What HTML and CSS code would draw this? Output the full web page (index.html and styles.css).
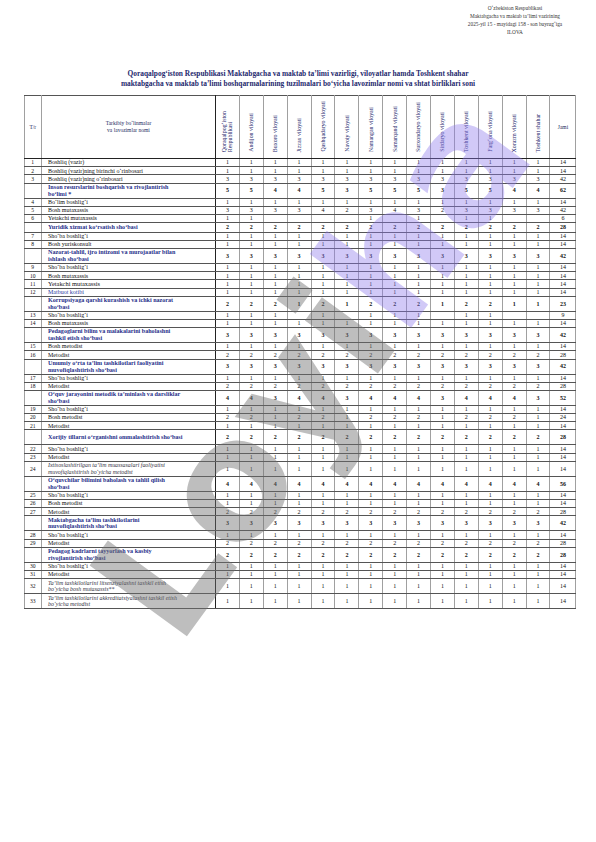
FILE: index.html
```html
<!DOCTYPE html>
<html lang="uz">
<head>
<meta charset="utf-8">
<title>Shtat birliklari</title>
<link rel="stylesheet" href="styles.css">
</head>
<body>
<div class="page">
  <div class="approval">
    <div>O‘zbekiston Respublikasi</div>
    <div>Maktabgacha va maktab ta’limi vazirining</div>
    <div>2025-yil 15 - mayidagi 158 - son buyrug‘iga</div>
    <div>ILOVA</div>
  </div>
  <h1 class="title">Qoraqalpog‘iston Respublikasi Maktabgacha va maktab ta’limi vazirligi, viloyatlar hamda Toshkent shahar<br>maktabgacha va maktab ta’limi boshqarmalarining tuzilmalari bo‘yicha lavozimlar nomi va shtat birliklari soni</h1>
  <table class="staff">
    <colgroup>
      <col class="c-n"><col class="c-l">
      <col class="c-r"><col class="c-r"><col class="c-r"><col class="c-r"><col class="c-r"><col class="c-r"><col class="c-r">
      <col class="c-r"><col class="c-r"><col class="c-r"><col class="c-r"><col class="c-r"><col class="c-r"><col class="c-r">
      <col class="c-j">
    </colgroup>
    <thead>
      <tr>
        <th class="h-n">T/r</th>
        <th class="h-l">Tarkibiy bo‘linmalar<br>va lavozimlar nomi</th>
        <th class="h-r"><span class="vt">Qoraqalpog‘iston<br>Respublikasi</span></th>
        <th class="h-r"><span class="vt">Andijon viloyati</span></th>
        <th class="h-r"><span class="vt">Buxoro viloyati</span></th>
        <th class="h-r"><span class="vt">Jizzax viloyati</span></th>
        <th class="h-r"><span class="vt">Qashqadaryo viloyati</span></th>
        <th class="h-r"><span class="vt">Navoiy viloyati</span></th>
        <th class="h-r"><span class="vt">Namangan viloyati</span></th>
        <th class="h-r"><span class="vt">Samarqand viloyati</span></th>
        <th class="h-r"><span class="vt">Surxondaryo viloyati</span></th>
        <th class="h-r"><span class="vt">Sirdaryo viloyati</span></th>
        <th class="h-r"><span class="vt">Toshkent viloyati</span></th>
        <th class="h-r"><span class="vt">Farg‘ona viloyati</span></th>
        <th class="h-r"><span class="vt">Xorazm viloyati</span></th>
        <th class="h-r"><span class="vt">Toshkent shahar</span></th>
        <th class="h-j">Jami</th>
      </tr>
    </thead>
    <tbody>
      <tr class="s"><td class="n">1</td><td class="l">Boshliq (vazir)</td><td>1</td><td>1</td><td>1</td><td>1</td><td>1</td><td>1</td><td>1</td><td>1</td><td>1</td><td>1</td><td>1</td><td>1</td><td>1</td><td>1</td><td class="j">14</td></tr>
      <tr class="s"><td class="n">2</td><td class="l">Boshliq (vazir)ning birinchi o‘rinbosari</td><td>1</td><td>1</td><td>1</td><td>1</td><td>1</td><td>1</td><td>1</td><td>1</td><td>1</td><td>1</td><td>1</td><td>1</td><td>1</td><td>1</td><td class="j">14</td></tr>
      <tr class="s"><td class="n">3</td><td class="l">Boshliq (vazir)ning o‘rinbosari</td><td>3</td><td>3</td><td>3</td><td>3</td><td>3</td><td>3</td><td>3</td><td>3</td><td>3</td><td>3</td><td>3</td><td>3</td><td>3</td><td>3</td><td class="j">42</td></tr>
      <tr class="d sec"><td class="n"></td><td class="l">Inson resurslarini boshqarish va rivojlantirish<br>bo‘limi *</td><td>5</td><td>5</td><td>4</td><td>4</td><td>5</td><td>3</td><td>5</td><td>5</td><td>5</td><td>3</td><td>5</td><td>5</td><td>4</td><td>4</td><td class="j">62</td></tr>
      <tr class="s"><td class="n">4</td><td class="l">Bo‘lim boshlig‘i</td><td>1</td><td>1</td><td>1</td><td>1</td><td>1</td><td>1</td><td>1</td><td>1</td><td>1</td><td>1</td><td>1</td><td>1</td><td>1</td><td>1</td><td class="j">14</td></tr>
      <tr class="s"><td class="n">5</td><td class="l">Bosh mutaxassis</td><td>3</td><td>3</td><td>3</td><td>3</td><td>4</td><td>2</td><td>3</td><td>4</td><td>3</td><td>2</td><td>3</td><td>3</td><td>3</td><td>3</td><td class="j">42</td></tr>
      <tr class="s"><td class="n">6</td><td class="l">Yetakchi mutaxassis</td><td>1</td><td>1</td><td></td><td></td><td></td><td></td><td>1</td><td></td><td>1</td><td></td><td>1</td><td>1</td><td></td><td></td><td class="j">6</td></tr>
      <tr class="s1 sec"><td class="n"></td><td class="l">Yuridik xizmat ko‘rsatish sho‘basi</td><td>2</td><td>2</td><td>2</td><td>2</td><td>2</td><td>2</td><td>2</td><td>2</td><td>2</td><td>2</td><td>2</td><td>2</td><td>2</td><td>2</td><td class="j">28</td></tr>
      <tr class="s"><td class="n">7</td><td class="l">Sho‘ba boshlig‘i</td><td>1</td><td>1</td><td>1</td><td>1</td><td>1</td><td>1</td><td>1</td><td>1</td><td>1</td><td>1</td><td>1</td><td>1</td><td>1</td><td>1</td><td class="j">14</td></tr>
      <tr class="s"><td class="n">8</td><td class="l">Bosh yuriskonsult</td><td>1</td><td>1</td><td>1</td><td>1</td><td>1</td><td>1</td><td>1</td><td>1</td><td>1</td><td>1</td><td>1</td><td>1</td><td>1</td><td>1</td><td class="j">14</td></tr>
      <tr class="d sec"><td class="n"></td><td class="l">Nazorat-tahlil, ijro intizomi va murojaatlar bilan<br>ishlash sho‘basi</td><td>3</td><td>3</td><td>3</td><td>3</td><td>3</td><td>3</td><td>3</td><td>3</td><td>3</td><td>3</td><td>3</td><td>3</td><td>3</td><td>3</td><td class="j">42</td></tr>
      <tr class="s"><td class="n">9</td><td class="l">Sho‘ba boshlig‘i</td><td>1</td><td>1</td><td>1</td><td>1</td><td>1</td><td>1</td><td>1</td><td>1</td><td>1</td><td>1</td><td>1</td><td>1</td><td>1</td><td>1</td><td class="j">14</td></tr>
      <tr class="s"><td class="n">10</td><td class="l">Bosh mutaxassis</td><td>1</td><td>1</td><td>1</td><td>1</td><td>1</td><td>1</td><td>1</td><td>1</td><td>1</td><td>1</td><td>1</td><td>1</td><td>1</td><td>1</td><td class="j">14</td></tr>
      <tr class="s"><td class="n">11</td><td class="l big">Yetakchi mutaxassis</td><td>1</td><td>1</td><td>1</td><td>1</td><td>1</td><td>1</td><td>1</td><td>1</td><td>1</td><td>1</td><td>1</td><td>1</td><td>1</td><td>1</td><td class="j">14</td></tr>
      <tr class="s"><td class="n">12</td><td class="l blue">Matbuot kotibi</td><td>1</td><td>1</td><td>1</td><td>1</td><td>1</td><td>1</td><td>1</td><td>1</td><td>1</td><td>1</td><td>1</td><td>1</td><td>1</td><td>1</td><td class="j">14</td></tr>
      <tr class="d sec"><td class="n"></td><td class="l">Korrupsiyaga qarshi kurashish va ichki nazorat<br>sho‘basi</td><td>2</td><td>2</td><td>2</td><td>1</td><td>2</td><td>1</td><td>2</td><td>2</td><td>2</td><td>1</td><td>2</td><td>2</td><td>1</td><td>1</td><td class="j">23</td></tr>
      <tr class="s"><td class="n">13</td><td class="l">Sho‘ba boshlig‘i</td><td>1</td><td>1</td><td>1</td><td></td><td>1</td><td></td><td>1</td><td>1</td><td>1</td><td></td><td>1</td><td>1</td><td></td><td></td><td class="j">9</td></tr>
      <tr class="s"><td class="n">14</td><td class="l">Bosh mutaxassis</td><td>1</td><td>1</td><td>1</td><td>1</td><td>1</td><td>1</td><td>1</td><td>1</td><td>1</td><td>1</td><td>1</td><td>1</td><td>1</td><td>1</td><td class="j">14</td></tr>
      <tr class="d sec"><td class="n"></td><td class="l">Pedagoglarni bilim va malakalarini baholashni<br>tashkil etish sho‘basi</td><td>3</td><td>3</td><td>3</td><td>3</td><td>3</td><td>3</td><td>3</td><td>3</td><td>3</td><td>3</td><td>3</td><td>3</td><td>3</td><td>3</td><td class="j">42</td></tr>
      <tr class="s"><td class="n">15</td><td class="l">Bosh metodist</td><td>1</td><td>1</td><td>1</td><td>1</td><td>1</td><td>1</td><td>1</td><td>1</td><td>1</td><td>1</td><td>1</td><td>1</td><td>1</td><td>1</td><td class="j">14</td></tr>
      <tr class="s"><td class="n">16</td><td class="l">Metodist</td><td>2</td><td>2</td><td>2</td><td>2</td><td>2</td><td>2</td><td>2</td><td>2</td><td>2</td><td>2</td><td>2</td><td>2</td><td>2</td><td>2</td><td class="j">28</td></tr>
      <tr class="d sec"><td class="n"></td><td class="l">Umumiy o‘rta ta’lim tashkilotlari faoliyatini<br>muvofiqlashtirish sho‘basi</td><td>3</td><td>3</td><td>3</td><td>3</td><td>3</td><td>3</td><td>3</td><td>3</td><td>3</td><td>3</td><td>3</td><td>3</td><td>3</td><td>3</td><td class="j">42</td></tr>
      <tr class="s"><td class="n">17</td><td class="l">Sho‘ba boshlig‘i</td><td>1</td><td>1</td><td>1</td><td>1</td><td>1</td><td>1</td><td>1</td><td>1</td><td>1</td><td>1</td><td>1</td><td>1</td><td>1</td><td>1</td><td class="j">14</td></tr>
      <tr class="s"><td class="n">18</td><td class="l">Metodist</td><td>2</td><td>2</td><td>2</td><td>2</td><td>2</td><td>2</td><td>2</td><td>2</td><td>2</td><td>2</td><td>2</td><td>2</td><td>2</td><td>2</td><td class="j">28</td></tr>
      <tr class="d sec"><td class="n"></td><td class="l">O‘quv jarayonini metodik ta’minlash va darsliklar<br>sho‘basi</td><td>4</td><td>4</td><td>3</td><td>4</td><td>4</td><td>3</td><td>4</td><td>4</td><td>4</td><td>3</td><td>4</td><td>4</td><td>4</td><td>3</td><td class="j">52</td></tr>
      <tr class="s"><td class="n">19</td><td class="l">Sho‘ba boshlig‘i</td><td>1</td><td>1</td><td>1</td><td>1</td><td>1</td><td>1</td><td>1</td><td>1</td><td>1</td><td>1</td><td>1</td><td>1</td><td>1</td><td>1</td><td class="j">14</td></tr>
      <tr class="s"><td class="n">20</td><td class="l">Bosh metodist</td><td>2</td><td>2</td><td>1</td><td>2</td><td>2</td><td>1</td><td>2</td><td>2</td><td>2</td><td>1</td><td>2</td><td>2</td><td>2</td><td>1</td><td class="j">24</td></tr>
      <tr class="s"><td class="n">21</td><td class="l">Metodist</td><td>1</td><td>1</td><td>1</td><td>1</td><td>1</td><td>1</td><td>1</td><td>1</td><td>1</td><td>1</td><td>1</td><td>1</td><td>1</td><td>1</td><td class="j">14</td></tr>
      <tr class="d sec"><td class="n"></td><td class="l">Xorijiy tillarni o‘rganishni ommalashtirish sho‘basi</td><td>2</td><td>2</td><td>2</td><td>2</td><td>2</td><td>2</td><td>2</td><td>2</td><td>2</td><td>2</td><td>2</td><td>2</td><td>2</td><td>2</td><td class="j">28</td></tr>
      <tr class="s"><td class="n">22</td><td class="l">Sho‘ba boshlig‘i</td><td>1</td><td>1</td><td>1</td><td>1</td><td>1</td><td>1</td><td>1</td><td>1</td><td>1</td><td>1</td><td>1</td><td>1</td><td>1</td><td>1</td><td class="j">14</td></tr>
      <tr class="s"><td class="n">23</td><td class="l">Metodist</td><td>1</td><td>1</td><td>1</td><td>1</td><td>1</td><td>1</td><td>1</td><td>1</td><td>1</td><td>1</td><td>1</td><td>1</td><td>1</td><td>1</td><td class="j">14</td></tr>
      <tr class="d"><td class="n">24</td><td class="l it">Ixtisoslashtirilgan ta’lim muassasalari faoliyatini<br>muvofiqlashtirish bo‘yicha metodist</td><td>1</td><td>1</td><td>1</td><td>1</td><td>1</td><td>1</td><td>1</td><td>1</td><td>1</td><td>1</td><td>1</td><td>1</td><td>1</td><td>1</td><td class="j">14</td></tr>
      <tr class="d sec"><td class="n"></td><td class="l">O‘quvchilar bilimini baholash va tahlil qilish<br>sho‘basi</td><td>4</td><td>4</td><td>4</td><td>4</td><td>4</td><td>4</td><td>4</td><td>4</td><td>4</td><td>4</td><td>4</td><td>4</td><td>4</td><td>4</td><td class="j">56</td></tr>
      <tr class="s"><td class="n">25</td><td class="l">Sho‘ba boshlig‘i</td><td>1</td><td>1</td><td>1</td><td>1</td><td>1</td><td>1</td><td>1</td><td>1</td><td>1</td><td>1</td><td>1</td><td>1</td><td>1</td><td>1</td><td class="j">14</td></tr>
      <tr class="s"><td class="n">26</td><td class="l">Bosh metodist</td><td>1</td><td>1</td><td>1</td><td>1</td><td>1</td><td>1</td><td>1</td><td>1</td><td>1</td><td>1</td><td>1</td><td>1</td><td>1</td><td>1</td><td class="j">14</td></tr>
      <tr class="s"><td class="n">27</td><td class="l">Metodist</td><td>2</td><td>2</td><td>2</td><td>2</td><td>2</td><td>2</td><td>2</td><td>2</td><td>2</td><td>2</td><td>2</td><td>2</td><td>2</td><td>2</td><td class="j">28</td></tr>
      <tr class="d sec"><td class="n"></td><td class="l">Maktabgacha ta’lim tashkilotlarini<br>muvofiqlashtirish sho‘basi</td><td>3</td><td>3</td><td>3</td><td>3</td><td>3</td><td>3</td><td>3</td><td>3</td><td>3</td><td>3</td><td>3</td><td>3</td><td>3</td><td>3</td><td class="j">42</td></tr>
      <tr class="s"><td class="n">28</td><td class="l">Sho‘ba boshlig‘i</td><td>1</td><td>1</td><td>1</td><td>1</td><td>1</td><td>1</td><td>1</td><td>1</td><td>1</td><td>1</td><td>1</td><td>1</td><td>1</td><td>1</td><td class="j">14</td></tr>
      <tr class="s"><td class="n">29</td><td class="l">Metodist</td><td>2</td><td>2</td><td>2</td><td>2</td><td>2</td><td>2</td><td>2</td><td>2</td><td>2</td><td>2</td><td>2</td><td>2</td><td>2</td><td>2</td><td class="j">28</td></tr>
      <tr class="d sec"><td class="n"></td><td class="l">Pedagog kadrlarni tayyorlash va kasbiy<br>rivojlantirish sho‘basi</td><td>2</td><td>2</td><td>2</td><td>2</td><td>2</td><td>2</td><td>2</td><td>2</td><td>2</td><td>2</td><td>2</td><td>2</td><td>2</td><td>2</td><td class="j">28</td></tr>
      <tr class="s"><td class="n">30</td><td class="l">Sho‘ba boshlig‘i</td><td>1</td><td>1</td><td>1</td><td>1</td><td>1</td><td>1</td><td>1</td><td>1</td><td>1</td><td>1</td><td>1</td><td>1</td><td>1</td><td>1</td><td class="j">14</td></tr>
      <tr class="s"><td class="n">31</td><td class="l">Metodist</td><td>1</td><td>1</td><td>1</td><td>1</td><td>1</td><td>1</td><td>1</td><td>1</td><td>1</td><td>1</td><td>1</td><td>1</td><td>1</td><td>1</td><td class="j">14</td></tr>
      <tr class="d"><td class="n">32</td><td class="l it">Ta’lim tashkilotlarini litsenziyalashni tashkil etish<br>bo‘yicha bosh mutaxassis**</td><td>1</td><td>1</td><td>1</td><td>1</td><td>1</td><td>1</td><td>1</td><td>1</td><td>1</td><td>1</td><td>1</td><td>1</td><td>1</td><td>1</td><td class="j">14</td></tr>
      <tr class="d"><td class="n">33</td><td class="l it">Ta’lim tashkilotlarini akkreditatsiyalashni tashkil etish<br>bo‘yicha metodist</td><td>1</td><td>1</td><td>1</td><td>1</td><td>1</td><td>1</td><td>1</td><td>1</td><td>1</td><td>1</td><td>1</td><td>1</td><td>1</td><td>1</td><td class="j">14</td></tr>
    </tbody>
  </table>
  <div class="watermark" aria-hidden="true"><span class="wm-gray">Loyi</span><span class="wm-purple">ha</span></div>
</div>
</body>
</html>
```

FILE: styles.css
```css
html, body {
  margin: 0;
  padding: 0;
  background: #ffffff;
}

body {
  font-family: "Liberation Serif", "Times New Roman", serif;
  color: #1a1a1a;
}

.page {
  position: relative;
  width: 596px;
  height: 842px;
  padding-top: 4px;
  box-sizing: border-box;
  overflow: hidden;
}

.approval {
  width: 130px;
  margin-left: 450px;
  text-align: center;
  font-size: 5.3px;
  line-height: 8px;
  color: #333333;
}

.title {
  margin: 33px 0 0;
  font-size: 7.4px;
  line-height: 9.5px;
  font-weight: bold;
  color: #1f2a6e;
  text-align: center;
}

.staff {
  margin: 7px 0 0 23.5px;
  width: 552.5px;
  border-collapse: collapse;
  table-layout: fixed;
  border: 1.5px solid #222222;
}

.c-n { width: 17.5px; }
.c-l { width: 174px; }
.c-r { width: 23.9px; }
.c-j { width: 26px; }

.staff th,
.staff td {
  padding: 0;
  border-top: 1px solid #555555;
  border-bottom: 1px solid #555555;
  border-left: 1px solid #a0a0a0;
  border-right: 1px solid #a0a0a0;
  overflow: hidden;
}

.staff thead th {
  height: 60px;
  border-bottom: 1.5px solid #222222;
  font-weight: normal;
  color: #222a5e;
}

.h-n {
  font-size: 5.5px;
  text-align: center;
  vertical-align: middle;
}

.h-l {
  font-size: 5.5px;
  line-height: 7px;
  text-align: center;
  vertical-align: middle;
  border-right: 1.5px solid #222222 !important;
}

.h-r {
  vertical-align: bottom;
  text-align: center;
  padding-bottom: 2px !important;
}

.h-j {
  font-size: 5.5px;
  text-align: center;
  vertical-align: middle;
  border-left: 1.5px solid #222222 !important;
}

.vt {
  display: inline-block;
  writing-mode: vertical-rl;
  transform: rotate(180deg);
  white-space: nowrap;
  font-size: 5.9px;
  line-height: 6.3px;
  text-align: left;
  color: #1f2a6e;
}

.staff td {
  font-size: 6px;
  line-height: 6.5px;
  text-align: center;
  vertical-align: middle;
  color: #111111;
}

.staff td.n {
  font-size: 5.6px;
}

.staff td.l {
  text-align: left;
  padding-left: 6px;
  padding-right: 2px;
  font-size: 6px;
  white-space: nowrap;
  border-right: 1.5px solid #222222;
}

.staff td.big {
  font-size: 6.4px;
}

.staff td.j {
  border-left: 1.5px solid #222222;
}

tr.s { height: 8.2px; }
tr.s1 { height: 9.5px; }
tr.d { height: 15px; }

tr.sec td {
  border-top: 1.5px solid #2a2a2a;
  font-weight: bold;
  color: #111111;
}

tr.sec td.l {
  font-size: 6.1px;
  line-height: 6.8px;
  color: #1f2f8a;
}

.staff td.blue {
  color: #2a3aa0;
}

.staff td.it {
  font-style: italic;
  font-size: 5.9px;
  line-height: 6.6px;
  color: #333344;
}

.watermark {
  position: absolute;
  left: 312px;
  top: 368px;
  transform: translate(-50%, -50%) rotate(-54deg);
  font-family: "DejaVu Sans", sans-serif;
  font-weight: bold;
  font-size: 165px;
  line-height: 1;
  white-space: nowrap;
  pointer-events: none;
}

.wm-gray {
  color: rgba(110, 110, 110, 0.45);
}

.wm-purple {
  color: rgba(140, 120, 235, 0.4);
}
```
